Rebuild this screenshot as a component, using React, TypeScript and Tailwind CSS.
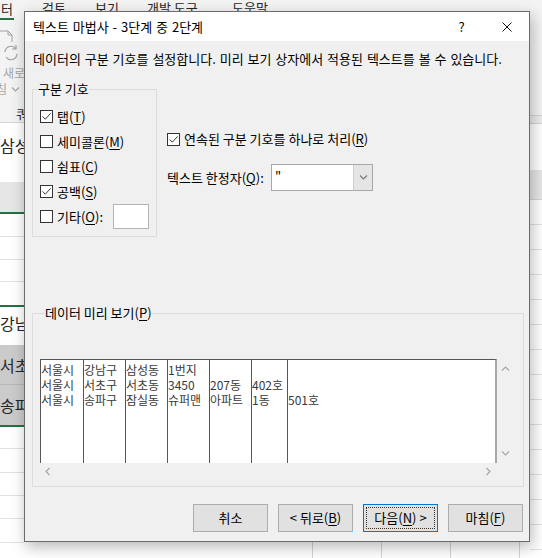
import React from "react";

const Mn: React.FC<{ children: React.ReactNode }> = ({ children }) => (
  <span className="underline underline-offset-[2px]">{children}</span>
);

const Check: React.FC<{ checked?: boolean }> = ({ checked }) => (
  <span className="flex h-[13px] w-[13px] shrink-0 items-center justify-center border border-[#333333] bg-white">
    {checked && (
      <svg width="11" height="11" viewBox="0 0 11 11">
        <path d="M1.6 5.4 L4.3 8.2 L9.6 2.4" fill="none" stroke="#333333" strokeWidth="1" />
      </svg>
    )}
  </span>
);

const Chevron: React.FC<{ dir: "up" | "down" | "left" | "right"; color?: string }> = ({ dir, color = "#a6a6a6" }) => {
  const d = {
    up: "M1 5.5 L4.5 2 L8 5.5",
    down: "M1 2.5 L4.5 6 L8 2.5",
    left: "M5.5 1 L2 4.5 L5.5 8",
    right: "M2.5 1 L6 4.5 L2.5 8",
  }[dir];
  return (
    <svg width="9" height="9" viewBox="0 0 9 9">
      <path d={d} fill="none" stroke={color} strokeWidth="1.2" />
    </svg>
  );
};

const preview: string[][] = [
  ["서울시", "서울시", "서울시"],
  ["강남구", "서초구", "송파구"],
  ["삼성동", "서초동", "잠실동"],
  ["1번지", "3450", "슈퍼맨"],
  ["", "207동", "아파트"],
  ["", "402호", "1동"],
  ["", "", "501호"],
];

const colWidths = ["w-[42px]", "w-[42px]", "w-[42px]", "w-[42px]", "w-[42px]", "w-[36px]", "flex-1"];

const LeftSheet = () => (
  <div className="flex w-[24px] shrink-0 flex-col overflow-hidden whitespace-nowrap text-[#262626]">
    <div className="flex h-[123px] shrink-0 flex-col border-b border-[#d4d4d4] bg-[#f3f3f3]">
      <div className="h-[17px] pl-[1px] pt-[1px] text-[13px] leading-[15px]">터</div>
      <div className="mt-[2px] h-[2px] w-[14px] bg-[#217346]" />
      <svg width="24" height="36" viewBox="0 0 24 36" className="mt-[8px] shrink-0">
        <path d="M-2 3 H8 L12 7 V14" fill="none" stroke="#a0a0a0" strokeWidth="1" />
        <path d="M8 3 V7 H12" fill="none" stroke="#a0a0a0" strokeWidth="1" />
        <path d="M5 24 A6 6 0 0 1 16 21" fill="none" stroke="#a0a0a0" strokeWidth="1.2" />
        <path d="M17 26 A6 6 0 0 1 6 29" fill="none" stroke="#a0a0a0" strokeWidth="1.2" />
        <path d="M16 17 V21 H12" fill="none" stroke="#a0a0a0" strokeWidth="1.2" />
      </svg>
      <div className="mt-[1px] pl-[3px] text-[12px] leading-[16px] text-[#a6a6a6]">새로</div>
      <div className="flex items-center text-[12px] leading-[16px] text-[#a6a6a6]">
        <span className="-ml-[4px]">침</span>
        <span className="ml-[4px]">
          <Chevron dir="down" color="#a6a6a6" />
        </span>
      </div>
      <div className="mt-[9px] pl-[16px] text-[13px] leading-[16px]">쿼</div>
    </div>
    <div className="h-[59px] shrink-0 bg-white pt-[12px] text-[16px] leading-[20px]">삼성</div>
    <div className="h-[30px] shrink-0 bg-[#e6e6e6]" />
    <div className="h-[2px] shrink-0 bg-[#217346]" />
    <div className="h-[23px] shrink-0 border-b border-[#e1e1e1]" />
    <div className="h-[23px] shrink-0 border-b border-[#e1e1e1]" />
    <div className="h-[22px] shrink-0 border-b border-[#e1e1e1]" />
    <div className="h-[23px] shrink-0" />
    <div className="h-[2px] shrink-0 bg-[#217346]" />
    <div className="h-[38px] shrink-0 pt-[6px] text-[16px] leading-[20px]">강남</div>
    <div className="h-[40px] shrink-0 border-b border-[#b8b8b8] bg-[#cbcbcb] pt-[10px] text-[16px] leading-[20px]">서초</div>
    <div className="h-[40px] shrink-0 bg-[#cbcbcb] pt-[10px] text-[16px] leading-[20px]">송파</div>
    <div className="h-[2px] shrink-0 bg-[#217346]" />
    <div className="h-[22px] shrink-0 border-b border-[#e1e1e1]" />
    <div className="h-[24px] shrink-0 border-b border-[#e1e1e1]" />
    <div className="h-[23px] shrink-0 border-b border-[#e1e1e1]" />
    <div className="h-[23px] shrink-0 border-b border-[#e1e1e1]" />
    <div className="h-[24px] shrink-0 border-b border-[#e1e1e1]" />
  </div>
);

const RightSheet = () => (
  <div className="flex w-[12px] shrink-0 flex-col overflow-hidden">
    <div className="h-[116px] shrink-0 border-b border-[#d4d4d4] bg-[#f3f3f3]" />
    <div className="h-[8px] shrink-0 border-b border-[#d4d4d4] bg-[#ededed]" />
    <div className="h-[46px] shrink-0 bg-white" />
    <div className="h-[30px] shrink-0 border-b border-[#d4d4d4] bg-[#e6e6e6]" />
    {Array.from({ length: 15 }).map((_, i) => (
      <div key={i} className="h-[25px] shrink-0 border-b border-[#e1e1e1] bg-white" />
    ))}
  </div>
);

const Button: React.FC<{ children: React.ReactNode; focused?: boolean }> = ({ children, focused }) =>
  focused ? (
    <button className="h-[28px] w-[75px] border border-[#0078d7] bg-[#e1e1e1] p-[2px] text-[13px] leading-[16px] text-black">
      <span className="flex h-full w-full items-center justify-center border border-dotted border-[#333333]">{children}</span>
    </button>
  ) : (
    <button className="flex h-[28px] w-[75px] items-center justify-center border border-[#adadad] bg-[#e1e1e1] text-[13px] leading-[16px] text-black">
      {children}
    </button>
  );

const Dialog = () => (
  <div className="relative z-10 flex h-[531px] shrink-0 flex-col border border-[#6b6b6b] bg-[#f0f0f0] text-[13px] shadow-[2px_5px_14px_rgba(0,0,0,0.28)]">
    <div className="flex h-[29px] shrink-0 items-center bg-white pl-[8px]">
      <span className="flex-1 leading-[16px] [word-spacing:1px]">텍스트 마법사 - 3단계 중 2단계</span>
      <span className="flex w-[45px] justify-center leading-[16px]">?</span>
      <span className="flex w-[45px] justify-center">
        <svg width="10" height="10" viewBox="0 0 10 10">
          <path d="M0.5 0.5 L9.5 9.5 M9.5 0.5 L0.5 9.5" stroke="#111111" strokeWidth="1" />
        </svg>
      </span>
    </div>

    <div className="flex flex-1 flex-col pl-[7px] pr-[6px] pt-[10px]">
      <p className="whitespace-nowrap pl-[1px] leading-[16px] [word-spacing:1px]">
        데이터의 구분 기호를 설정합니다. 미리 보기 상자에서 적용된 텍스트를 볼 수 있습니다.
      </p>

      <div className="mt-[14px] flex">
        <fieldset className="w-[125px] shrink-0 border border-[#dcdcdc] pb-[7px] pt-[7px]">
          <legend className="ml-[5px] leading-[16px]">구분 기호</legend>
          <div className="flex h-[25px] items-center pl-[7px]">
            <Check checked />
            <span className="ml-[4px] leading-[16px]">탭(<Mn>T</Mn>)</span>
          </div>
          <div className="flex h-[25px] items-center pl-[7px]">
            <Check />
            <span className="ml-[4px] leading-[16px]">세미콜론(<Mn>M</Mn>)</span>
          </div>
          <div className="flex h-[25px] items-center pl-[7px]">
            <Check />
            <span className="ml-[4px] leading-[16px]">쉼표(<Mn>C</Mn>)</span>
          </div>
          <div className="flex h-[25px] items-center pl-[7px]">
            <Check checked />
            <span className="ml-[4px] leading-[16px]">공백(<Mn>S</Mn>)</span>
          </div>
          <div className="flex h-[25px] items-center pl-[7px] pr-[7px]">
            <Check />
            <span className="ml-[4px] flex-1 leading-[16px]">기타(<Mn>O</Mn>):</span>
            <span className="h-[25px] w-[36px] border border-[#b4b4b4] bg-white" />
          </div>
        </fieldset>

        <div className="ml-[10px] flex flex-col pt-[50px]">
          <div className="flex h-[16px] items-center">
            <Check checked />
            <span className="ml-[4px] whitespace-nowrap leading-[16px]">연속된 구분 기호를 하나로 처리(<Mn>R</Mn>)</span>
          </div>
          <div className="mt-[17px] flex items-center">
            <span className="w-[104px] whitespace-nowrap leading-[16px]">텍스트 한정자(<Mn>Q</Mn>):</span>
            <div className="flex h-[27px] w-[102px] border border-[#a8a8a8] bg-white">
              <span className="flex-1 pl-[3px] leading-[22px] text-black">&quot;</span>
              <span className="flex w-[19px] items-center justify-center border-l border-[#cfcfcf] bg-[#e5e5e5]">
                <Chevron dir="down" color="#7a7a7a" />
              </span>
            </div>
          </div>
        </div>
      </div>

      <fieldset className="mt-[68px] w-[492px] border border-[#dcdcdc] pb-[6px] pl-[7px] pt-[38px]">
        <legend className="ml-[5px] leading-[16px]">
          데이터 미리 보기(<Mn>P</Mn>)
        </legend>
        <div className="grid grid-cols-[457px_17px] grid-rows-[104px_17px]">
          <div className="flex border-l border-t border-[#555555] border-r-2 border-r-[#a8a8a8] bg-white text-[12px] leading-[15px] text-[#3a3a3a]">
            {preview.map((col, i) => (
              <div key={i} className={`${colWidths[i]} ${i > 0 ? "border-l border-[#555555]" : ""} flex flex-col pt-[2px]`}>
                {col.map((cell, j) => (
                  <span key={j} className="h-[15px] whitespace-nowrap">
                    {cell}
                  </span>
                ))}
              </div>
            ))}
          </div>
          <div className="flex flex-col items-center justify-between pb-[5px] pt-[6px]">
            <Chevron dir="up" />
            <Chevron dir="down" />
          </div>
          <div className="flex items-center justify-between px-[4px]">
            <Chevron dir="left" />
            <Chevron dir="right" />
          </div>
          <div />
        </div>
      </fieldset>

      <div className="mt-[17px] flex justify-end gap-[10px]">
        <Button>취소</Button>
        <Button>
          &lt; 뒤로(<Mn>B</Mn>)
        </Button>
        <Button focused>
          다음(<Mn>N</Mn>) &gt;
        </Button>
        <Button>
          마침(<Mn>F</Mn>)
        </Button>
      </div>
    </div>
  </div>
);

export default function App() {
  return (
    <div className="flex h-[558px] w-[542px] overflow-hidden bg-white font-['Noto_Sans_CJK_KR',sans-serif] text-[12px] text-black">
      <LeftSheet />
      <div className="flex w-[506px] shrink-0 flex-col">
        <div className="flex h-[11px] shrink-0 overflow-hidden bg-[#f3f3f3] pl-[18px] text-[13px] leading-[15px] text-[#262626]">
          <span className="w-[53px] shrink-0">검토</span>
          <span className="w-[52px] shrink-0">보기</span>
          <span className="w-[85px] shrink-0">개발 도구</span>
          <span className="shrink-0">도움말</span>
        </div>
        <Dialog />
        <div className="flex h-[16px] shrink-0 bg-white">
          <div className="w-[289px] border-r border-[#d4d4d4]" />
          <div className="w-[69px] border-r border-[#d4d4d4]" />
          <div className="w-[69px] border-r border-[#d4d4d4]" />
          <div className="w-[69px] border-r border-[#d4d4d4]" />
        </div>
      </div>
      <RightSheet />
    </div>
  );
}
